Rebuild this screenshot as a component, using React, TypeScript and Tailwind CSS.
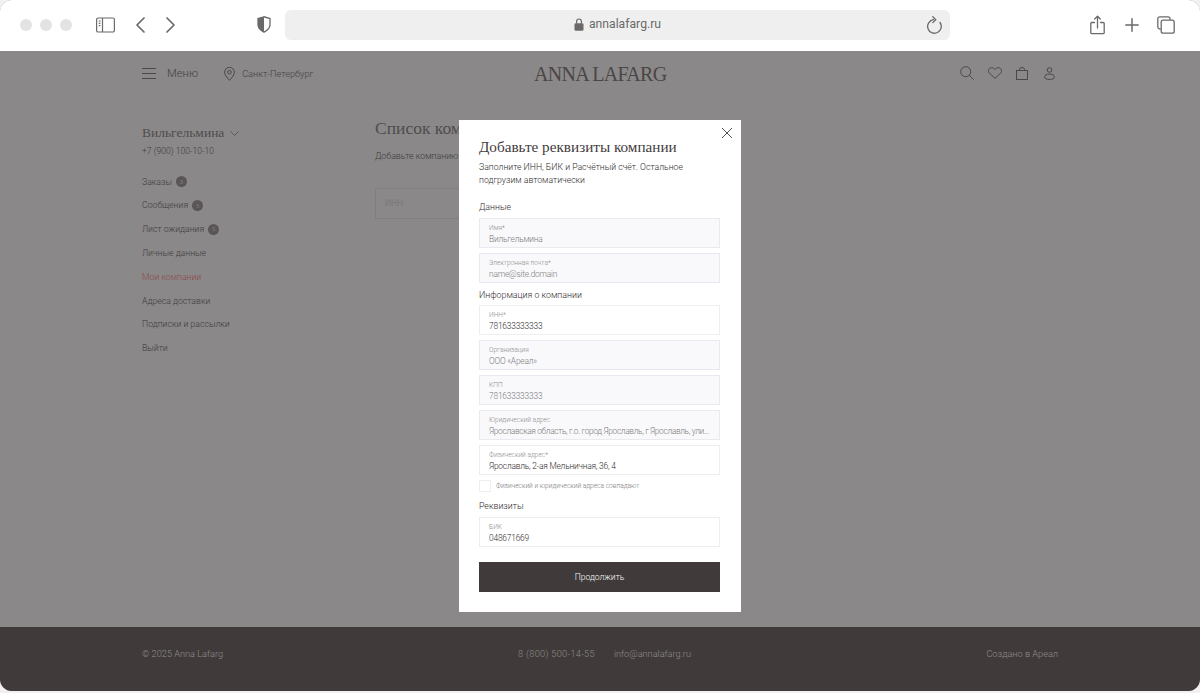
import { ReactNode } from "react";

const sans = "font-['Roboto',sans-serif] font-light";
const serif = "font-['Liberation_Serif',serif]";

const navItems = [
  { label: "Заказы", badge: "3" },
  { label: "Сообщения", badge: "5" },
  { label: "Лист ожидания", badge: "5" },
  { label: "Личные данные" },
  { label: "Мои компании", active: true },
  { label: "Адреса доставки" },
  { label: "Подписки и рассылки" },
  { label: "Выйти" },
];

function BrowserBar() {
  return (
    <div className="flex h-[51px] items-center bg-white pb-[2px] pl-5 pr-[25px] text-[#6b6969]">
      <div className="flex gap-2">
        <span className="size-3 rounded-full bg-[#e3e3e3]" />
        <span className="size-3 rounded-full bg-[#e3e3e3]" />
        <span className="size-3 rounded-full bg-[#e3e3e3]" />
      </div>
      {/* sidebar toggle */}
      <svg className="ml-6 h-[16px] w-[19px]" viewBox="0 0 19 16" fill="none" stroke="currentColor" strokeWidth="1.2">
        <rect x="0.6" y="1" width="17.8" height="14" rx="1.6" />
        <path d="M6.5 1v14" />
        <path d="M2.8 4.2h1.6M2.8 6.4h1.6M2.8 8.6h1.6" />
      </svg>
      <svg className="ml-[20px] h-[18px] w-[11px]" viewBox="0 0 11 18" fill="none" stroke="currentColor" strokeWidth="1.7" strokeLinecap="round" strokeLinejoin="round">
        <path d="M9 2 2 9l7 7" />
      </svg>
      <svg className="ml-[19px] h-[18px] w-[11px]" viewBox="0 0 11 18" fill="none" stroke="currentColor" strokeWidth="1.7" strokeLinecap="round" strokeLinejoin="round">
        <path d="m2 2 7 7-7 7" />
      </svg>
      {/* privacy shield */}
      <svg className="ml-[81px] h-[17px] w-[14px]" viewBox="0 0 14 17">
        <path d="M7 .8 1 2.6v6c0 3.6 2.6 6 6 7.6 3.400-1.600 6-4 6-7.600v-6z" fill="none" stroke="currentColor" strokeWidth="1.300" />
        <path d="M7 .8 1 2.600v6c0 3.600 2.600 6 6 7.600z" fill="currentColor" />
      </svg>
      <div className="relative ml-[14px] flex h-[30px] w-[665px] items-center justify-center rounded-md bg-[#efefef]">
        <svg className="mr-[5px] h-[13px] w-[10px]" viewBox="0 0 10 13" fill="currentColor">
          <path d="M2 5.500V3.400a3 3 0 0 1 6 0v2.100h-1.200V3.400a1.800 1.800 0 0 0-3.600 0v2.100z" />
          <rect x="0.500" y="5.300" width="9" height="7.500" rx="1.300" />
        </svg>
        <span className="font-['Roboto',sans-serif] text-[12.200px] leading-none">annalafarg.ru</span>
        <svg className="absolute right-[7px] top-[6px] h-[19px] w-[16px]" viewBox="0 0 16 19" fill="none" stroke="currentColor" strokeWidth="1.300" strokeLinecap="round" strokeLinejoin="round">
          <path d="M6.500 3.700A6.800 6.800 0 1 0 13 6.500" />
          <path d="M5.800.8 8.800 3.700 5.800 6.600" />
        </svg>
      </div>
      <div className="ml-auto flex items-center">
        <svg className="h-[20px] w-[15px]" viewBox="0 0 15 20" fill="none" stroke="currentColor" strokeWidth="1.300" strokeLinecap="round" strokeLinejoin="round">
          <path d="M4.500 7.500H1.800A1 1 0 0 0 .8 8.500v9.200a1 1 0 0 0 1 1h11.400a1 1 0 0 0 1-1V8.500a1 1 0 0 0-1-1h-2.700" />
          <path d="M7.500 13V1.200M4.700 4 7.500 1.200 10.300 4" />
        </svg>
        <svg className="ml-[20px] size-[14px]" viewBox="0 0 14 14" stroke="currentColor" strokeWidth="1.500" strokeLinecap="round">
          <path d="M7 .8v12.400M.8 7h12.400" />
        </svg>
        <svg className="ml-[18px] size-[18px]" viewBox="0 0 18 18" fill="none" stroke="currentColor" strokeWidth="1.300">
          <path d="M3.700 13H2.800A2 2 0 0 1 .8 11V2.800a2 2 0 0 1 2-2H11a2 2 0 0 1 2 2v1" />
          <rect x="4.200" y="4.200" width="13" height="13" rx="2" />
        </svg>
      </div>
    </div>
  );
}

function SiteHeader() {
  return (
    <div className="relative flex h-[46px] items-center px-[142px] pb-[1px] text-[#464242]">
      <svg className="h-[11px] w-[14px]" viewBox="0 0 14 11" stroke="currentColor" strokeWidth="0.900">
        <path d="M0 .5h14M0 5.500h14M0 10.500h14" />
      </svg>
      <span className={`${sans} ml-[11px] mt-[1px] text-[11.300px] leading-none`}>Меню</span>
      <svg className="ml-[26px] h-[14px] w-[11px]" viewBox="0 0 11 14" fill="none" stroke="currentColor" strokeWidth="0.900">
        <path d="M5.500 13.300C2.600 10 .6 7.800.6 5.200a4.900 4.900 0 0 1 9.800 0c0 2.600-2 4.800-4.900 8.100z" />
        <circle cx="5.500" cy="5.200" r="1.800" />
      </svg>
      <span className={`${sans} ml-[7px] mt-[1px] text-[9.200px] leading-none`}>Санкт-Петербург</span>
      <span className={`${serif} absolute left-[534px] top-[12px] text-[20px] leading-[22px] tracking-[-0.7px] text-[#4a4646]`}>ANNA LAFARG</span>
      <div className="ml-auto mb-[1px] mr-[3px] flex items-center">
        <svg className="size-[14px]" viewBox="0 0 14 14" fill="none" stroke="currentColor" strokeWidth="0.900">
          <circle cx="5.700" cy="5.700" r="5" />
          <path d="m9.300 9.300 4.300 4.300" />
        </svg>
        <svg className="ml-[14px] h-[12px] w-[14px]" viewBox="0 0 14 12" fill="none" stroke="currentColor" strokeWidth="0.900">
          <path d="M7 11.300 1.400 6.200C-.6 4.200.8.700 3.700.7 5.200.7 6.300 1.500 7 2.600 7.700 1.500 8.800.7 10.300.7c2.900 0 4.300 3.500 2.300 5.500z" />
        </svg>
        <svg className="ml-[14px] h-[13px] w-[12px]" viewBox="0 0 12 13" fill="none" stroke="currentColor" strokeWidth="0.900">
          <rect x="0.500" y="3.500" width="11" height="9" />
          <path d="M3.500 3.500V2.500a2.500 2 0 0 1 5 0v1" />
        </svg>
        <svg className="ml-[16px] h-[13px] w-[11px]" viewBox="0 0 11 13" fill="none" stroke="currentColor" strokeWidth="0.900">
          <circle cx="5.500" cy="3" r="2.300" />
          <ellipse cx="5.500" cy="9.800" rx="4.800" ry="2.700" />
        </svg>
      </div>
    </div>
  );
}

function Sidebar() {
  return (
    <aside className="w-[183px] shrink-0">
      <div className={`${serif} mt-[23px] flex h-[18px] items-center text-[13.500px] leading-none text-[#504c4c]`}>
        Вильгельмина
        <svg className="ml-[6px] h-[5px] w-[9px]" viewBox="0 0 9 5" fill="none" stroke="currentColor" strokeWidth="0.800">
          <path d="m.5.500 4 4 4-4" />
        </svg>
      </div>
      <div className={`${sans} mt-[3px] text-[8.600px] leading-[12px] text-[#403c3c]`}>+7 (900) 100-10-10</div>
      <nav className="mt-[13px] flex flex-col">
        {navItems.map((item) => (
          <div
            key={item.label}
            className={`${sans} flex h-[23.800px] items-center text-[8.700px] leading-none ${item.active ? "text-[#8e4a4a]" : "text-[#403c3c]"}`}
          >
            {item.label}
            {item.badge && (
              <span className="ml-[4px] flex size-[11px] items-center justify-center rounded-full bg-[#5a5657] text-[6px] text-[#8a8889]">
                {item.badge}
              </span>
            )}
          </div>
        ))}
      </nav>
    </aside>
  );
}

function BackgroundContent() {
  return (
    <div className="w-[366px]">
      <div className={`${serif} mt-[17px] text-[17.500px] leading-[20px] text-[#504c4c]`}>Список компаний</div>
      <div className={`${sans} mt-[12px] text-[8.800px] leading-[12px] text-[#403c3c]`}>Добавьте компанию для оформления заказа</div>
      <div className={`${sans} mt-[26px] flex h-[31px] items-center border border-[#807e7f] px-[9px] text-[8.500px] text-[#737172]`}>ИНН</div>
    </div>
  );
}

function Field({ label, value, locked, tight }: { label: string; value: string; locked?: boolean; tight?: boolean }) {
  return (
    <div className={`flex h-[30px] flex-col justify-center border px-[9px] pt-[2px] ${locked ? "border-[#e9e9f0] bg-[#f9f9fb]" : "border-[#eeeeef] bg-white"}`}>
      <div className={`${sans} text-[6.600px] leading-[9px] text-[#8f8d8d]`}>{label}</div>
      <div className={`${sans} mt-[1px] whitespace-nowrap text-[8.400px] leading-[11px] ${tight ? "tracking-[-0.35px]" : "tracking-[-0.2px]"} ${locked ? "text-[#7d7b7b]" : "text-[#2f2b2b]"}`}>{value}</div>
    </div>
  );
}

function SectionTitle({ children, className }: { children: ReactNode; className: string }) {
  return <div className={`${sans} text-[8.800px] leading-[12px] text-[#2f2b2b] ${className}`}>{children}</div>;
}

function CompanyModal() {
  return (
    <div className="absolute left-[459px] top-[69px] h-[492px] w-[282px] bg-white pl-5 pr-[21px] pt-[18px]">
      <svg className="absolute right-[9px] top-[8px] size-[10px]" viewBox="0 0 10 10" stroke="#3f3b3b" strokeWidth="0.900">
        <path d="m0 0 10 10M10 0 0 10" />
      </svg>
      <h2 className={`${serif} text-[15.200px] leading-[18px] text-[#3f3b3b]`}>Добавьте реквизиты компании</h2>
      <p className={`${sans} mt-[5px] text-[8.700px] leading-[13px] text-[#2f2b2b]`}>
        Заполните ИНН, БИК и Расчётный счёт. Остальное подгрузим автоматически
      </p>
      <SectionTitle className="mt-[14px]">Данные</SectionTitle>
      <div className="mt-[5px] flex flex-col gap-[5px]">
        <Field label="Имя*" value="Вильгельмина" locked />
        <Field label="Электронная почта*" value="name@site.domain" locked />
      </div>
      <SectionTitle className="mt-[6px]">Информация о компании</SectionTitle>
      <div className="mt-[4px] flex flex-col gap-[5px]">
        <Field label="ИНН*" value="781633333333" />
        <Field label="Организация" value="ООО «Ареал»" locked />
        <Field label="КПП" value="781633333333" locked />
        <Field label="Юридический адрес" value="Ярославская область, г.о. город Ярославль, г Ярославль, ули..." locked tight />
        <Field label="Физический адрес*" value="Ярославль, 2-ая Мельничная, 36, 4" />
      </div>
      <div className="mt-[5px] flex h-[12px] items-center">
        <span className="size-[12px] border border-[#eeeeef]" />
        <span className={`${sans} ml-[5px] text-[6.600px] leading-none text-[#7d7b7b]`}>Физический и юридический адреса совпадают</span>
      </div>
      <SectionTitle className="mt-[8px]">Реквизиты</SectionTitle>
      <div className="mt-[5px]">
        <Field label="БИК" value="048671669" />
      </div>
      <button className={`${sans} mt-[15px] flex h-[30px] w-full items-center justify-center bg-[#403b3a] text-[8.500px] text-white`}>Продолжить</button>
    </div>
  );
}

export default function App() {
  return (
    <div className="h-[693px] w-[1200px] overflow-hidden bg-[#f1f1f1]">
      <div className="h-[691px] overflow-hidden rounded-[12px] bg-[#8a8889]">
        <BrowserBar />
        <div className="relative">
          <SiteHeader />
          <div className="flex h-[530px] pl-[142px] pt-[4px]">
            <Sidebar />
            <div className="ml-[50px]">
              <BackgroundContent />
            </div>
          </div>
          <footer className={`${sans} flex h-[64px] items-center bg-[#403b3a] px-[142px] pb-[11px] text-[9.200px] text-[#8f8c8b]`}>
            <span>© 2025 Anna Lafarg</span>
            <span className="ml-[295px] tracking-[0.3px]">8 (800) 500-14-55</span>
            <span className="ml-[19px]">info@annalafarg.ru</span>
            <span className="ml-auto">Создано в Ареал</span>
          </footer>
          <CompanyModal />
        </div>
      </div>
    </div>
  );
}
